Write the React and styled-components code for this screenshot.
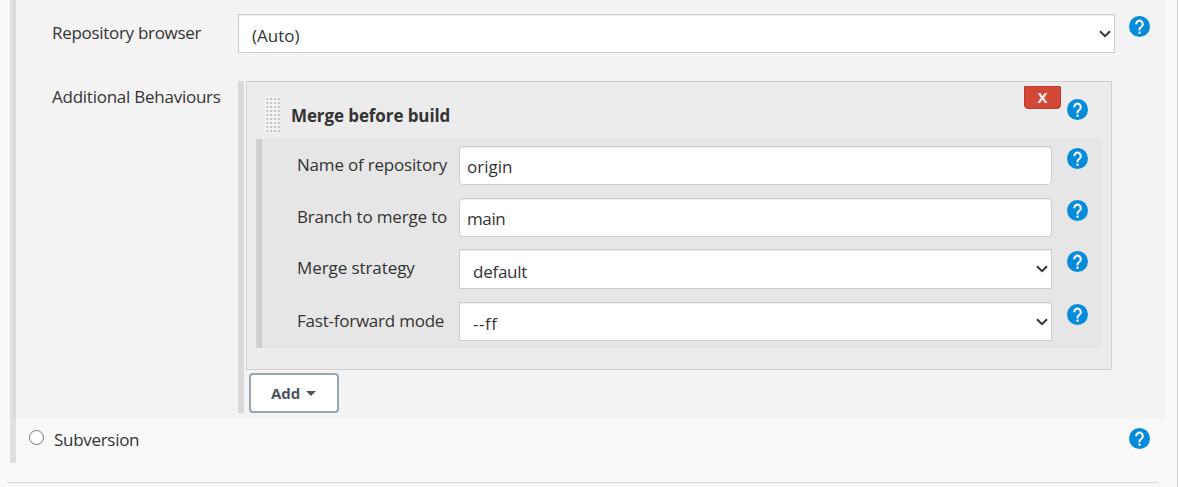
import React from "react";
import styled, { createGlobalStyle } from "styled-components";

const GlobalStyle = createGlobalStyle`
  *, *::before, *::after { box-sizing: border-box; }
  body {
    margin: 0;
    background: #f9f9f9;
    color: #333;
    font-family: "Segoe UI", "Open Sans", "Noto Sans", sans-serif;
    font-size: 17px;
  }
  input, select, button { font: inherit; color: inherit; margin: 0; }
`;

const Page = styled.div`
  height: 487px;
  border-right: 1px solid #ccc;
  overflow: hidden;
`;

const RadioBlock = styled.section`
  height: 463px;
  margin-left: 10px;
  padding-left: 3px;
  background: linear-gradient(#dfdfdf, #dfdfdf) 0 0 / 6px 100% no-repeat;
`;

const GitPanel = styled.div`
  width: 1152px;
  height: 419px;
  padding: 14px 0 0 39px;
  background: rgba(0, 0, 0, 0.025);
`;

const Row = styled.div`
  display: flex;
  align-items: flex-start;
  height: ${(p) => p.$height}px;
`;

const Label = styled.label`
  flex: none;
  width: ${(p) => p.$width}px;
  padding-top: ${(p) => p.$top ?? 7}px;
  line-height: 24px;
  letter-spacing: ${(p) => p.$spacing ?? 0}px;
  white-space: nowrap;
`;

const TextInput = styled.input`
  display: block;
  width: 593px;
  height: 39px;
  padding: 2px 7px 1px;
  border: 1px solid #ccc;
  border-radius: 4px;
  background: #fff;
  box-shadow: inset 0 1px 1px rgba(0, 0, 0, 0.075);
  letter-spacing: ${(p) => p.$spacing ?? 0}px;
`;

const SelectWrap = styled.div`
  display: grid;
  align-items: center;
  width: ${(p) => p.$width}px;
  height: ${(p) => p.$height ?? 39}px;
  > * { grid-area: 1 / 1; }
  > svg { justify-self: end; margin-right: 4px; pointer-events: none; }
`;

const SelectBox = styled.select`
  appearance: none;
  width: 100%;
  height: 100%;
  padding: 4px 13px 0;
  border: 1px solid #ccc;
  border-radius: 0;
  background: #fff;
  box-shadow: inset 0 1px 1px rgba(0, 0, 0, 0.075);
  letter-spacing: ${(p) => p.$spacing ?? 0}px;
`;

const HelpButton = styled.a`
  flex: none;
  width: 21px;
  height: 21px;
  margin: ${(p) => p.$top ?? 2}px 0 0 ${(p) => p.$left ?? 15}px;
  svg { display: block; }
`;

const Behaviours = styled.div`
  width: 874px;
  height: 332px;
  padding-left: 2px;
  border-left: 6px solid #d9d9d9;
`;

const Card = styled.div`
  width: 866px;
  height: 289px;
  padding: 4px 9px 0;
  border: 1px solid #d0d0d0;
  background: #ececec;
`;

const CardHeader = styled.div`
  display: flex;
  align-items: flex-start;
  height: 53px;
  padding-right: 14px;
`;

const DragHandle = styled.div`
  width: 15px;
  height: 36px;
  margin: 11px 11px 0 9px;
  background: #f8f8f7;
`;

const CardTitle = styled.b`
  flex: 1;
  padding-top: 18px;
  line-height: 24px;
  letter-spacing: -0.1px;
`;

const DeleteButton = styled.button`
  width: 37px;
  height: 23px;
  padding: 0;
  border: 1px solid #c03a2b;
  border-radius: 1px 1px 4px 4px;
  background: #d14836;
  color: #f2eef0;
  font: bold 15px/21px "Open Sans", sans-serif;
`;

const Fields = styled.div`
  width: 846px;
  height: 209px;
  padding: 7px 0 0 41px;
  background:
    linear-gradient(#d3d3d3, #d3d3d3) 0 0 / 3px 100% no-repeat,
    linear-gradient(#cdcdcd, #cdcdcd) 3px 0 / 3px 100% no-repeat,
    #e6e6e6;
`;

const AddButton = styled.button`
  display: flex;
  align-items: center;
  gap: 6px;
  width: 90px;
  height: 40px;
  margin: 3px 0 0 3px;
  padding: 0 0 0 20px;
  border: 2px solid #98a6b1;
  border-radius: 4px;
  background: #fff;
  color: #4d545d;
  font: bold 15px "Open Sans", sans-serif;
`;

const RadioRow = styled.div`
  display: flex;
  align-items: flex-start;
  padding: 9px 0 0 16px;
`;

const Radio = styled.input`
  appearance: none;
  width: 15px;
  height: 15px;
  margin: 2px 10px 0 0 !important;
  border: 1.5px solid #767676;
  border-radius: 50%;
  background: #fff;
`;

const Rule = styled.hr`
  width: 1151px;
  height: 1px;
  margin: 19px 0 0 7px;
  border: 0;
  background: #dcdcdc;
`;

const Chevron = () => (
  <svg width="12" height="8" viewBox="0 0 12 8" fill="none">
    <path d="M1 1.2 6 6.2 11 1.2" stroke="#333" strokeWidth="2" />
  </svg>
);

const Help = (props) => (
  <HelpButton {...props}>
    <svg width="21" height="21" viewBox="0 0 21 21">
      <circle cx="10.5" cy="10.5" r="10.5" fill="#068ada" />
      <path
        transform="translate(-2.46 -3.8) scale(1.08 1.2)"
        d="M12 6c-2.21 0-4 1.79-4 4h2c0-1.1.9-2 2-2s2 .9 2 2c0 2-3 1.75-3 5h2c0-2.25 3-2.5 3-5 0-2.21-1.79-4-4-4z"
        fill="#f5f5f5"
      />
      <rect x="9.4" y="15.5" width="2.3" height="2.3" rx=".6" fill="#f5f5f5" />
    </svg>
  </HelpButton>
);

const Dots = () => (
  <svg width="15" height="36" viewBox="0 0 15 36">
    {Array.from({ length: 9 }, (_, r) =>
      [0, 1, 2, 3].map((c) => (
        <g key={`${r}-${c}`} transform={`translate(${1 + c * 3.8} ${1 + r * 4})`}>
          <rect width="2.4" height="2.4" fill="#d4d4d2" />
          <rect x="1" width="1.4" height="1.6" fill="#bdbdbb" />
        </g>
      ))
    )}
  </svg>
);

const Select = ({ width, height, spacing, value }) => (
  <SelectWrap $width={width} $height={height}>
    <SelectBox $spacing={spacing} defaultValue={value}>
      <option>{value}</option>
    </SelectBox>
    <Chevron />
  </SelectWrap>
);

export default function App() {
  return (
    <>
      <GlobalStyle />
      <Page>
        <RadioBlock>
          <GitPanel>
            <Row $height={67}>
              <Label $width={186} $spacing={-0.3}>Repository browser</Label>
              <Select width={877} value="(Auto)" />
              <Help $left={14} />
            </Row>
            <Row $height={332}>
              <Label $width={186} $top={4} $spacing={-0.25}>Additional Behaviours</Label>
              <Behaviours>
                <Card>
                  <CardHeader>
                    <DragHandle><Dots /></DragHandle>
                    <CardTitle>Merge before build</CardTitle>
                    <DeleteButton>X</DeleteButton>
                    <Help $left={6} $top={13} />
                  </CardHeader>
                  <Fields>
                    <Row $height={52}>
                      <Label $width={162} $spacing={-0.2}>Name of repository</Label>
                      <TextInput defaultValue="origin" />
                      <Help />
                    </Row>
                    <Row $height={51}>
                      <Label $width={162} $spacing={-0.17}>Branch to merge to</Label>
                      <TextInput defaultValue="main" $spacing={-0.4} />
                      <Help />
                    </Row>
                    <Row $height={53}>
                      <Label $width={162} $spacing={-0.08}>Merge strategy</Label>
                      <Select width={593} height={40} spacing={-0.25} value="default" />
                      <Help />
                    </Row>
                    <Row $height={39}>
                      <Label $width={162} $spacing={-0.23}>Fast-forward mode</Label>
                      <Select width={593} spacing={0.5} value="--ff" />
                      <Help />
                    </Row>
                  </Fields>
                </Card>
                <AddButton>
                  Add
                  <svg width="10" height="5" viewBox="0 0 10 5"><path d="M0 0h10L5 5z" fill="#4d545d" /></svg>
                </AddButton>
              </Behaviours>
            </Row>
          </GitPanel>
          <RadioRow>
            <Radio type="radio" />
            <Label $width={1075} $top={0} $spacing={-0.3}>Subversion</Label>
            <Help $left={0} $top={0} />
          </RadioRow>
        </RadioBlock>
        <Rule />
      </Page>
    </>
  );
}
